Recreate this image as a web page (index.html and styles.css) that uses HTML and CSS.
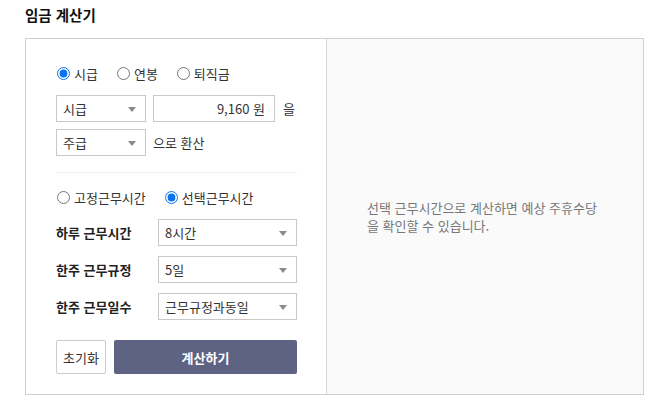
FILE: index.html
```html
<!DOCTYPE html>
<html lang="ko">
<head>
<meta charset="utf-8">
<title>임금 계산기</title>
<link rel="stylesheet" href="styles.css">
</head>
<body>
<div class="page">
  <h1 class="title">임금 계산기</h1>
  <div class="calc">
    <div class="form">
      <div class="radio-row">
        <label class="radio"><input type="radio" name="type" checked><span>시급</span></label>
        <label class="radio"><input type="radio" name="type"><span>연봉</span></label>
        <label class="radio"><input type="radio" name="type"><span>퇴직금</span></label>
      </div>
      <div class="line line-first">
        <div class="select sel-small"><span>시급</span><i class="arrow"></i></div>
        <div class="input">9,160 원</div>
        <span class="suffix">을</span>
      </div>
      <div class="line line-second">
        <div class="select sel-small"><span>주급</span><i class="arrow"></i></div>
        <span class="after">으로 환산</span>
      </div>
      <hr class="divider">
      <div class="radio-row radio-row2">
        <label class="radio"><input type="radio" name="hours"><span>고정근무시간</span></label>
        <label class="radio"><input type="radio" name="hours" checked><span>선택근무시간</span></label>
      </div>
      <div class="field">
        <span class="field-label">하루 근무시간</span>
        <div class="select sel-wide"><span>8시간</span><i class="arrow"></i></div>
      </div>
      <div class="field">
        <span class="field-label">한주 근무규정</span>
        <div class="select sel-wide"><span>5일</span><i class="arrow"></i></div>
      </div>
      <div class="field">
        <span class="field-label">한주 근무일수</span>
        <div class="select sel-wide"><span>근무규정과동일</span><i class="arrow"></i></div>
      </div>
      <div class="buttons">
        <button class="btn-reset">초기화</button>
        <button class="btn-calc">계산하기</button>
      </div>
    </div>
    <div class="result">
      <p class="note">선택 근무시간으로 계산하면 예상 주휴수당을 확인할 수 있습니다.</p>
    </div>
  </div>
</div>
</body>
</html>
```

FILE: styles.css
```css
* { box-sizing: border-box; }
html, body { margin: 0; padding: 0; background: #fff; }
body {
  font-family: "Noto Sans CJK KR", "Noto Sans", sans-serif;
  font-size: 13px;
  color: #333;
}
.page { padding: 0 13px 0 25px; }
.title {
  margin: 0;
  padding-top: 4px;
  height: 38px;
  font-size: 14.5px;
  line-height: 22px;
  font-weight: 700;
  color: #111;
}
.calc {
  display: flex;
  width: 619px;
  height: 357px;
  border: 1px solid #cfcfcf;
}
.form {
  width: 301px;
  border-right: 1px solid #d8d8d8;
  padding: 26px 29px 0 30px;
  display: flex;
  flex-direction: column;
}
.radio-row {
  display: flex;
  align-items: center;
  height: 16px;
  margin-bottom: 14px;
}
.radio {
  display: flex;
  align-items: center;
  margin-right: 18px;
  color: #333;
}
.radio input {
  width: 13px;
  height: 13px;
  margin: 0 4px 0 1px;
  accent-color: #0a74f0;
}
.line {
  display: flex;
  align-items: center;
}
.line-second { margin-top: 7px; }
.select {
  position: relative;
  display: flex;
  align-items: center;
  height: 27px;
  border: 1px solid #c8c8c8;
  background: #fff;
  padding-left: 6px;
  color: #333;
}
.sel-small { width: 90px; }
.sel-wide { width: 139px; }
.arrow {
  position: absolute;
  right: 9px;
  top: 11px;
  width: 0;
  height: 0;
  border-left: 4.5px solid transparent;
  border-right: 4.5px solid transparent;
  border-top: 5px solid #8a8a8a;
}
.input {
  width: 122px;
  height: 27px;
  margin-left: 7px;
  border: 1px solid #c8c8c8;
  display: flex;
  align-items: center;
  justify-content: flex-end;
  padding-right: 9px;
  color: #333;
}
.suffix { margin-left: 8px; }
.after { margin-left: 7px; }
.divider {
  width: 100%;
  margin: 16px 0 0;
  border: 0;
  border-top: 1px solid #ececec;
  height: 0;
}
.radio-row2 { margin-top: 16px; }
.field {
  display: flex;
  align-items: center;
  justify-content: space-between;
  margin-bottom: 10px;
}
.field-label {
  font-weight: 700;
  color: #222;
}
.buttons {
  display: flex;
  gap: 8px;
  margin-top: 10px;
}
.buttons button {
  font-family: inherit;
  font-size: 13px;
  height: 34px;
  border-radius: 2px;
  cursor: pointer;
}
.btn-reset {
  width: 50px;
  border: 1px solid #cdcdcd;
  background: #fff;
  color: #333;
  padding: 0;
}
.btn-calc {
  flex: 1;
  border: 0;
  background: #5e6283;
  color: #fff;
  font-weight: 700;
}
.result {
  flex: 1;
  background: #fafafa;
  display: flex;
  align-items: center;
  padding: 0 40px 0 40px;
}
.note {
  margin: 0;
  color: #777;
  line-height: 18px;
}
```
